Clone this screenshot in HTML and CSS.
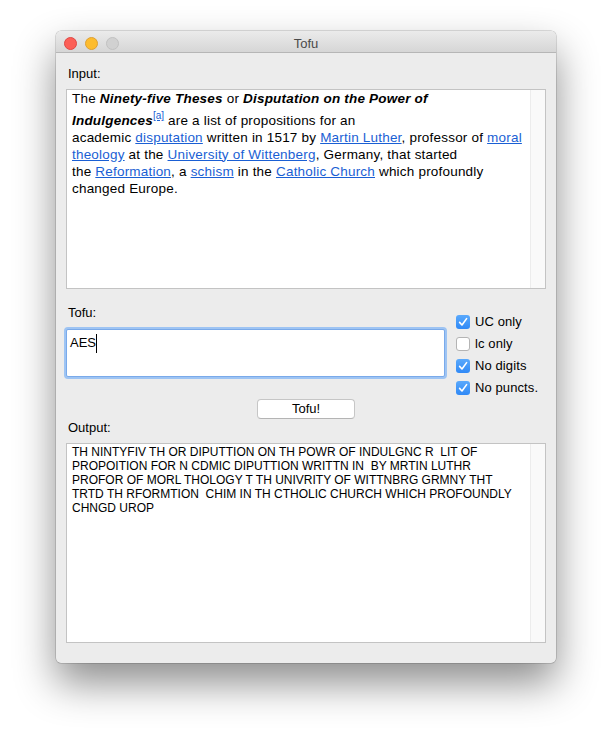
FILE: index.html
```html
<!DOCTYPE html>
<html>
<head>
<meta charset="utf-8">
<title>Tofu</title>
<link rel="stylesheet" href="styles.css">
</head>
<body>
<div class="window">
  <div class="titlebar">
    <div class="lights">
      <span class="light red"></span>
      <span class="light yellow"></span>
      <span class="light gray"></span>
    </div>
    <div class="title">Tofu</div>
  </div>
  <div class="content">
    <div class="label">Input:</div>
    <div class="box input-box">
      <div class="box-text rich">The <b><i>Ninety-five Theses</i></b> or <b><i>Disputation on the Power of</i></b><br><b><i>Indulgences</i></b><sup><a href="#">[a]</a></sup> are a list of propositions for an<br>academic <a href="#">disputation</a> written in 1517 by <a href="#">Martin Luther</a>, professor of <a href="#">moral</a><br><a href="#">theology</a> at the <a href="#">University of Wittenberg</a>, Germany, that started<br>the <a href="#">Reformation</a>, a <a href="#">schism</a> in the <a href="#">Catholic Church</a> which profoundly<br>changed Europe.</div>
      <div class="scroller"></div>
    </div>

    <div class="tofu-row">
      <div class="tofu-left">
        <div class="label">Tofu:</div>
        <div class="field"><span class="field-text">AES</span><span class="caret"></span></div>
      </div>
      <div class="checks">
        <div class="check-row"><span class="cb on"><svg viewBox="0 0 14 14" width="14" height="14"><path d="M3.6 7.4 L6 10 L10.6 3.6" fill="none" stroke="#fff" stroke-width="1.6" stroke-linecap="round" stroke-linejoin="round"/></svg></span><span class="check-label">UC only</span></div>
        <div class="check-row"><span class="cb"></span><span class="check-label">lc only</span></div>
        <div class="check-row"><span class="cb on"><svg viewBox="0 0 14 14" width="14" height="14"><path d="M3.6 7.4 L6 10 L10.6 3.6" fill="none" stroke="#fff" stroke-width="1.6" stroke-linecap="round" stroke-linejoin="round"/></svg></span><span class="check-label">No digits</span></div>
        <div class="check-row"><span class="cb on"><svg viewBox="0 0 14 14" width="14" height="14"><path d="M3.6 7.4 L6 10 L10.6 3.6" fill="none" stroke="#fff" stroke-width="1.6" stroke-linecap="round" stroke-linejoin="round"/></svg></span><span class="check-label">No puncts.</span></div>
      </div>
    </div>

    <div class="button-row"><button class="btn">Tofu!</button></div>

    <div class="label">Output:</div>
    <div class="box output-box">
      <div class="box-text mono">TH NINTYFIV TH OR DIPUTTION ON TH POWR OF INDULGNC R&nbsp; LIT OF<br>PROPOITION FOR N CDMIC DIPUTTION WRITTN IN&nbsp; BY MRTIN LUTHR<br>PROFOR OF MORL THOLOGY T TH UNIVRITY OF WITTNBRG GRMNY THT<br>TRTD TH RFORMTION&nbsp; CHIM IN TH CTHOLIC CHURCH WHICH PROFOUNDLY<br>CHNGD UROP</div>
      <div class="scroller"></div>
    </div>
  </div>
</div>
</body>
</html>
```

FILE: styles.css
```css
html, body {
  margin: 0;
  padding: 0;
  background: #ffffff;
}
body {
  width: 612px;
  height: 744px;
  overflow: hidden;
  font-family: "Liberation Sans", Arial, sans-serif;
  color: #000;
}
.window {
  margin: 31px 0 0 56px;
  width: 500px;
  height: 632px;
  background: #ececec;
  border-radius: 5px;
  box-shadow: 0 0 0 0.5px rgba(0,0,0,0.25), 0 20px 40px rgba(0,0,0,0.45);
  overflow: hidden;
  display: flex;
  flex-direction: column;
}
.titlebar {
  height: 21px;
  border-bottom: 1px solid #b6b6b6;
  background: linear-gradient(#ebebeb, #d6d6d6);
  display: flex;
  align-items: center;
  position: relative;
  padding-top: 3px;
  box-sizing: border-box;
  height: 22px;
}
.lights {
  display: flex;
  gap: 8px;
  padding-left: 8px;
}
.light {
  width: 11px;
  height: 11px;
  border-radius: 50%;
  display: block;
}
.light.red { background: #fc5f57; border: 0.5px solid #df4744; }
.light.yellow { background: #fdbc2e; border: 0.5px solid #dea033; }
.light.gray { background: #d1d1d1; border: 0.5px solid #c1c1c1; }
.title {
  position: absolute;
  left: 0;
  right: 0;
  top: 3px;
  line-height: 20px;
  text-align: center;
  font-size: 13px;
  color: #4a4a4a;
}
.content {
  padding: 13px 10px 0 10px;
  display: flex;
  flex-direction: column;
}
.label {
  font-size: 13px;
  line-height: 16px;
  height: 16px;
  padding-left: 2px;
  margin-bottom: 7px;
}
.box {
  height: 198px;
  border: 1px solid #c3c3c3;
  background: #fff;
  display: flex;
}
.box-text {
  flex: 1;
  padding: 0 5px;
  white-space: nowrap;
  overflow: hidden;
}
.rich {
  font-size: 13.5px;
  letter-spacing: 0.2px;
  line-height: 17px;
  padding-top: 0;
}
.rich a {
  color: #1a5fd4;
  text-decoration: underline;
}
.rich sup {
  font-size: 10px;
  letter-spacing: 0;
  vertical-align: super;
}
.mono {
  font-size: 12px;
  line-height: 14px;
  padding-top: 1px;
}
.scroller {
  width: 14px;
  background: #f9f9f9;
  border-left: 1px solid #ececec;
}
.tofu-row {
  margin-top: 16px;
  display: flex;
  height: 94px;
}
.tofu-left {
  width: 379px;
  display: flex;
  flex-direction: column;
}
.tofu-left .label {
  margin-bottom: 8px;
}
.field {
  border: 1px solid #7aaaea;
  box-shadow: 0 0 0 2px #9ec4f3;
  border-radius: 2px;
  background: #fff;
  display: flex;
  align-items: flex-start;
  padding: 5px 0 0 3px;
  box-sizing: border-box;
  height: 48px;
}
.field-text {
  font-size: 13px;
  line-height: 16px;
}
.caret {
  width: 1px;
  height: 19px;
  background: #000;
  margin-top: -1px;
}
.checks {
  margin-left: 11px;
  padding-top: 6px;
  display: flex;
  flex-direction: column;
}
.check-row {
  height: 22px;
  display: flex;
  align-items: center;
  gap: 5px;
}
.cb {
  width: 14px;
  height: 14px;
  box-sizing: border-box;
  border-radius: 3px;
  border: 1px solid #b4b4b4;
  background: #fff;
  display: block;
}
.cb.on {
  border: none;
  background: linear-gradient(#5aa9fc, #2f89f6);
}
.cb svg { display: block; }
.check-label {
  font-size: 13px;
  line-height: 16px;
  letter-spacing: 0.1px;
}
.button-row {
  display: flex;
  justify-content: center;
  height: 21px;
}
.btn {
  width: 98px;
  height: 20px;
  margin: 0;
  padding: 0;
  border: 1px solid #c6c6c6;
  border-bottom-color: #b4b4b4;
  border-radius: 4px;
  background: #fff;
  font-family: "Liberation Sans", Arial, sans-serif;
  font-size: 13px;
  color: #000;
  line-height: 18px;
}
.output-box {
  height: 198px;
}
```
